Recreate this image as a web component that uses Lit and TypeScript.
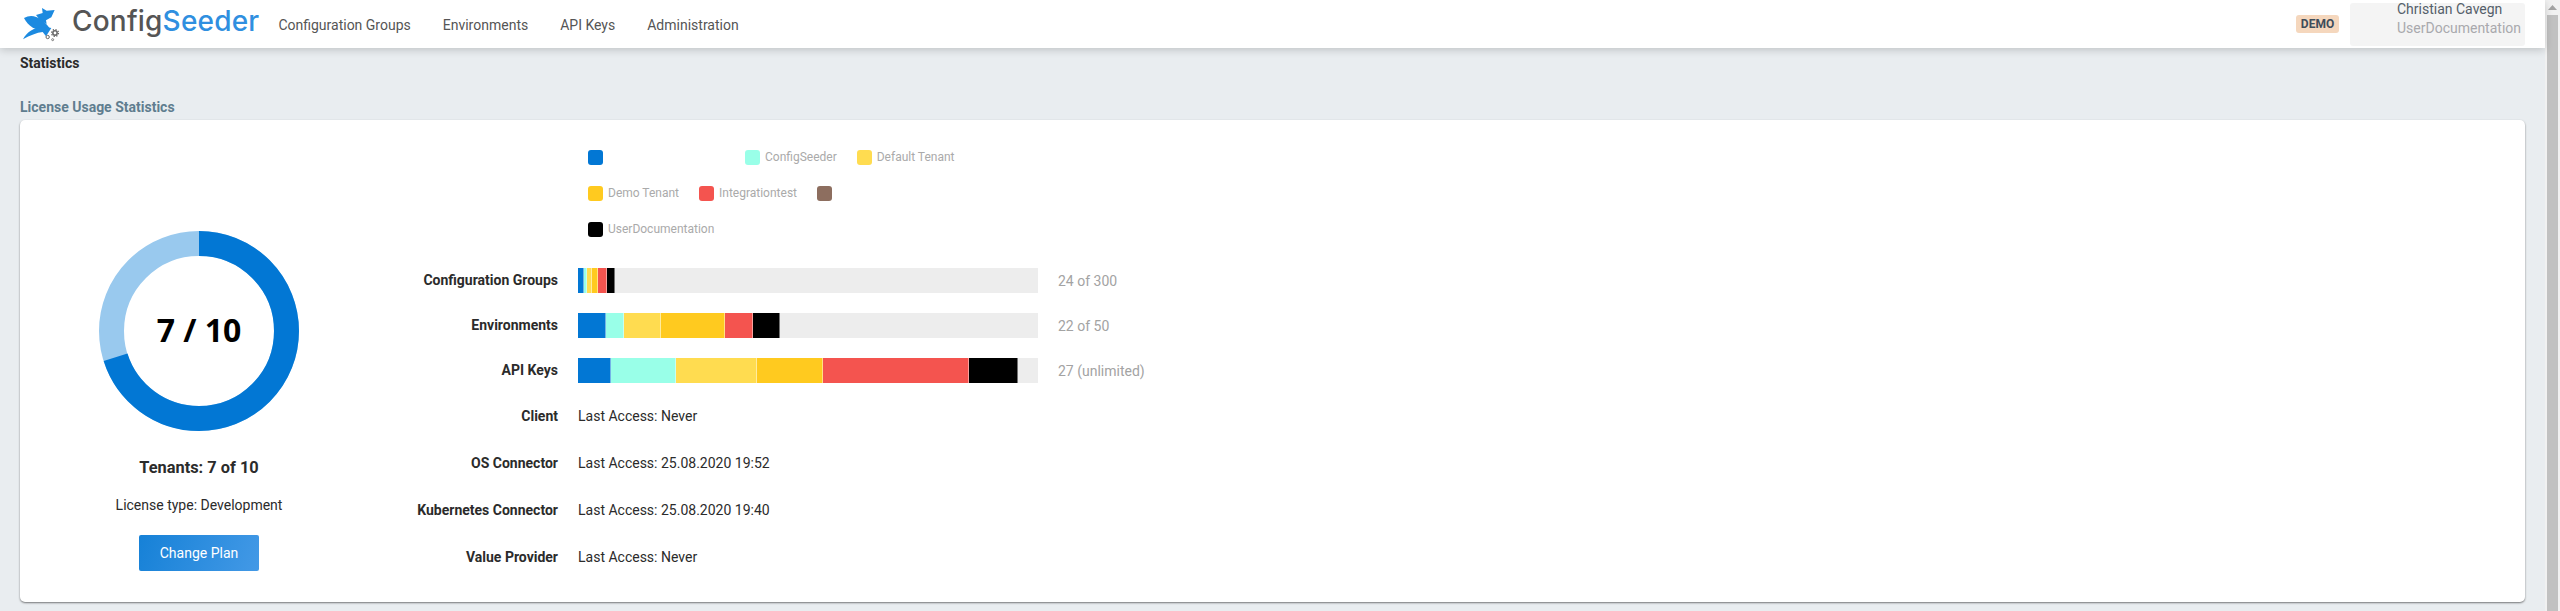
import { LitElement, html, css, svg } from 'lit';
import { customElement } from 'lit/decorators.js';

const COLORS = {
  blue: '#0277d4',
  cyan: '#99ffe8',
  yellow: '#ffdc50',
  orange: '#ffca1f',
  red: '#f4544f',
  brown: '#8d6e5f',
  black: '#000000',
};

const LEGEND = [
  { color: COLORS.blue, name: '', blank: true },
  { color: COLORS.cyan, name: 'ConfigSeeder' },
  { color: COLORS.yellow, name: 'Default Tenant' },
  { color: COLORS.orange, name: 'Demo Tenant' },
  { color: COLORS.red, name: 'Integrationtest' },
  { color: COLORS.brown, name: '' },
  { color: COLORS.black, name: 'UserDocumentation' },
];

const SERIES = [COLORS.blue, COLORS.cyan, COLORS.yellow, COLORS.orange, COLORS.red, COLORS.black];

const USAGE = [
  { label: 'Configuration Groups', counts: [4, 2, 3, 4, 6, 5], max: 300, text: '24 of 300' },
  { label: 'Environments', counts: [3, 2, 4, 7, 3, 3], max: 50, text: '22 of 50' },
  { label: 'API Keys', counts: [2, 4, 5, 4, 9, 3], max: 28.2, text: '27 (unlimited)' },
];

const ACCESS = [
  { label: 'Client', text: 'Last Access: Never' },
  { label: 'OS Connector', text: 'Last Access: 25.08.2020 19:52' },
  { label: 'Kubernetes Connector', text: 'Last Access: 25.08.2020 19:40' },
  { label: 'Value Provider', text: 'Last Access: Never' },
];

const logo = svg`
  <g fill="#1c8ae0">
    <path d="M48 33 L68 27 L66 12 L80 20 L104 18 L94 40 L78 49 L80 60 L60 48 Z" />
    <path d="M12 42 C38 26 68 42 90 74 C62 86 30 76 12 42 Z" />
    <path d="M9 106 C22 80 54 62 94 72 L78 97 L68 84 C50 86 30 94 9 106 Z" />
  </g>
  <g fill="none" stroke="#666666">
    <circle cx="83" cy="99" r="5" stroke-width="3" />
    <circle cx="98" cy="107" r="3" stroke-width="2.5" />
    <circle cx="105" cy="87" r="6.5" stroke-width="4.5" />
    <circle cx="105" cy="87" r="10.5" stroke-width="3.5" stroke-dasharray="4 4.25" />
  </g>
`;

@customElement('app-root')
export class AppRoot extends LitElement {
  static styles = css`
    :host {
      display: block;
      height: 611px;
      overflow: hidden;
      font-family: Roboto, sans-serif;
      font-size: 14px;
      color: #2b2b2b;
      background: #e9edf0;
    }

    .page {
      display: flex;
      height: 100%;
    }

    .main {
      flex: 1;
      min-width: 0;
    }

    .scrollbar {
      width: 15px;
      background: #f1f1f1;
      display: flex;
      flex-direction: column;
    }

    .arrow {
      height: 15px;
      display: flex;
      align-items: center;
      justify-content: center;
    }

    .thumb {
      flex: 1;
      margin: 0 2px;
      background: #c1c1c1;
    }

    header {
      height: 48px;
      display: flex;
      align-items: center;
      padding: 0 20px;
      background: #fff;
      box-shadow: 0 2px 8px rgba(0, 0, 0, 0.18);
      position: relative;
    }

    .logo {
      width: 44px;
      height: 40px;
      display: block;
    }

    .brand {
      margin-left: 8px;
      font-family: Inter, sans-serif;
      font-size: 28px;
      font-weight: 500;
      color: #555;
      letter-spacing: 0.2px;
      line-height: 32px;
      margin-top: -6px;
    }

    .brand span {
      color: #2f8fe0;
    }

    nav {
      display: flex;
      gap: 32px;
      margin-left: 19px;
      color: #555;
      margin-top: 2px;
    }

    .right {
      margin-left: auto;
      display: flex;
      align-items: center;
    }

    .badge {
      width: 43px;
      height: 18px;
      line-height: 18px;
      text-align: center;
      background: #f5d7bd;
      color: #3f4d5a;
      font-size: 12px;
      font-weight: 700;
      border-radius: 3px;
    }

    .user {
      margin-left: 11px;
      width: 175px;
      height: 43px;
      box-sizing: border-box;
      padding-left: 47px;
      background: #f4f4f4;
      border-radius: 3px;
      line-height: 19px;
      white-space: nowrap;
      margin-top: 1px;
    }

    .user div {
      position: relative;
      top: -3px;
      color: #555f6a;
    }

    .user div + div {
      color: #a9a9ad;
    }

    .content {
      padding: 5px 20px 0;
    }

    h1,
    h2 {
      margin: 0;
      font-size: 14px;
      font-weight: 700;
      line-height: 20px;
    }

    h2 {
      margin-top: 24px;
      color: #5f7d8f;
    }

    .card {
      margin-top: 3px;
      height: 482px;
      display: flex;
      background: #fff;
      border-radius: 5px;
      box-shadow: 0 1px 2px rgba(0, 0, 0, 0.5);
    }

    .summary {
      width: 358px;
      display: flex;
      flex-direction: column;
      align-items: center;
      padding-top: 111px;
    }

    .donut {
      display: block;
      width: 200px;
      height: 200px;
    }

    .donut text {
      font-family: 'Open Sans', sans-serif;
      font-size: 32px;
      font-weight: 700;
      fill: #000;
    }

    .tenants {
      margin-top: 27px;
      font-size: 16.38px;
      font-weight: 700;
      line-height: 20px;
    }

    .license {
      margin-top: 17px;
      line-height: 20px;
    }

    .plan {
      margin-top: 20px;
      width: 120px;
      height: 36px;
      border: 0;
      border-radius: 2px;
      font: inherit;
      color: #fff;
      background: linear-gradient(110deg, #1681d7, #4399e6);
    }

    .details {
      flex: 1;
      padding-top: 30px;
    }

    .legend {
      margin-left: 210px;
      width: 380px;
      display: flex;
      flex-wrap: wrap;
      gap: 21px 20px;
      margin-bottom: 31px;
    }

    .legend-item {
      display: flex;
      align-items: center;
      height: 15px;
      font-size: 12px;
      color: #aaa;
    }

    .legend-item span {
      margin-top: -2px;
    }

    .swatch {
      width: 15px;
      height: 15px;
      border-radius: 3px;
      margin-right: 5px;
    }

    .blank {
      width: 117px;
    }

    .rows {
      display: grid;
      grid-template-columns: 180px 1fr;
      column-gap: 20px;
      row-gap: 20px;
    }

    .label {
      text-align: right;
      font-weight: 700;
      line-height: 25px;
    }

    .usage {
      display: flex;
      align-items: center;
      gap: 20px;
      height: 25px;
      color: #a3a3a3;
    }

    .bar {
      width: 460px;
      height: 25px;
      display: flex;
      background: #ededed;
    }

    .bar div {
      box-sizing: border-box;
      border-right: 1px solid rgba(255, 255, 255, 0.45);
    }

    .access {
      line-height: 27px;
    }

    .label.tall {
      line-height: 27px;
    }
  `;

  private renderDonut(used: number, total: number) {
    const r = 87.5;
    const circumference = 2 * Math.PI * r;
    const dash = (used / total) * circumference;
    return html`
      <svg class="donut" viewBox="0 0 200 200">
        <circle cx="100" cy="100" r=${r} fill="none" stroke="#99c9ee" stroke-width="25" />
        <circle
          cx="100"
          cy="100"
          r=${r}
          fill="none"
          stroke=${COLORS.blue}
          stroke-width="25"
          stroke-dasharray="${dash} ${circumference}"
          transform="rotate(-90 100 100)"
        />
        <text x="100" y="111" text-anchor="middle">${used} / ${total}</text>
      </svg>
    `;
  }

  render() {
    return html`
      <div class="page">
        <div class="main">
          <header>
            <svg class="logo" viewBox="0 0 132 120">${logo}</svg>
            <div class="brand">Config<span>Seeder</span></div>
            <nav>
              <span>Configuration Groups</span>
              <span>Environments</span>
              <span>API Keys</span>
              <span>Administration</span>
            </nav>
            <div class="right">
              <div class="badge">DEMO</div>
              <div class="user">
                <div>Christian Cavegn</div>
                <div>UserDocumentation</div>
              </div>
            </div>
          </header>
          <div class="content">
            <h1>Statistics</h1>
            <h2>License Usage Statistics</h2>
            <div class="card">
              <div class="summary">
                ${this.renderDonut(7, 10)}
                <div class="tenants">Tenants: 7 of 10</div>
                <div class="license">License type: Development</div>
                <button class="plan">Change Plan</button>
              </div>
              <div class="details">
                <div class="legend">
                  ${LEGEND.map(
                    (item) => html`
                      <div class="legend-item">
                        <div class="swatch" style="background:${item.color}"></div>
                        <span class=${item.blank ? 'blank' : ''}>${item.name}</span>
                      </div>
                    `,
                  )}
                </div>
                <div class="rows">
                  ${USAGE.map(
                    (row) => html`
                      <div class="label">${row.label}</div>
                      <div class="usage">
                        <div class="bar">
                          ${row.counts.map(
                            (count, i) => html`
                              <div
                                style="width:${(count / row.max) * 100}%;background:${SERIES[i]}"
                              ></div>
                            `,
                          )}
                        </div>
                        <span>${row.text}</span>
                      </div>
                    `,
                  )}
                  ${ACCESS.map(
                    (row) => html`
                      <div class="label tall">${row.label}</div>
                      <div class="access">${row.text}</div>
                    `,
                  )}
                </div>
              </div>
            </div>
          </div>
        </div>
        <div class="scrollbar">
          <div class="arrow">
            <svg width="9" height="6" viewBox="0 0 9 6"><path d="M4.5 0 L9 5 H0 Z" fill="#a3a3a3" /></svg>
          </div>
          <div class="thumb"></div>
        </div>
      </div>
    `;
  }
}

declare global {
  interface HTMLElementTagNameMap {
    'app-root': AppRoot;
  }
}
